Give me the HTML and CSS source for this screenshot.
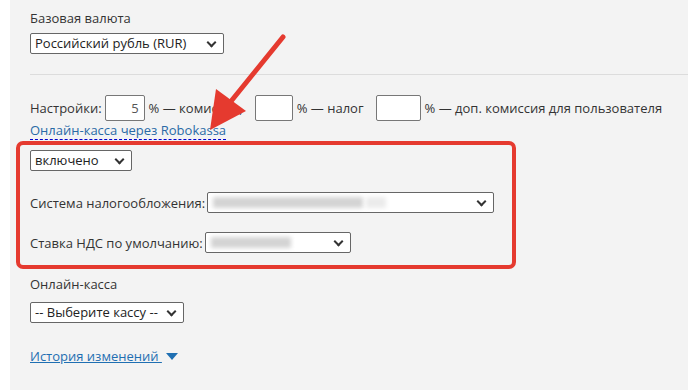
FILE: index.html
```html
<!doctype html>
<html>
<head>
    <meta charset="utf-8">
    <title>Настройки оплаты</title>
    <link rel="stylesheet" href="styles.css">
</head>
<body>
    <div class="page">
        <div class="field">
            <div class="label">Базовая валюта</div>
            <div class="sel sel-cur">Российский рубль (RUR)<span class="chev"></span></div>
        </div>
        <div class="line"></div>
        <div class="settings">
            <span>Настройки:</span>
            <span class="inp inp1">5</span>
            <span class="gap">% — комиссия,</span>
            <span class="inp inp2"></span>
            <span class="gap">% — налог</span>
            <span class="inp inp3"></span>
            <span>% — доп. комиссия для пользователя</span>
        </div>
        <a class="dash" href="#">Онлайн-касса через Robokassa</a>
        <div class="sel sel-on">включено<span class="chev"></span></div>
        <div class="row row-tax">
            <span>Система налогообложения:</span>
            <div class="sel sel-tax"><span class="blur b1"></span><span class="blur b1a"></span><span class="chev"></span></div>
        </div>
        <div class="row row-vat">
            <span>Ставка НДС по умолчанию:</span>
            <div class="sel sel-vat"><span class="blur b2"></span><span class="chev"></span></div>
        </div>
        <div class="label label-kassa">Онлайн-касса</div>
        <div class="sel sel-kassa">-- Выберите кассу --<span class="chev"></span></div>
        <div class="history">
            <a href="#">История изменений&nbsp;</a><span class="tri"></span>
        </div>

        <!-- пометка поверх скриншота -->
        <div class="mark"></div>
        <svg class="arrow" width="100" height="110" viewBox="0 0 100 110">
            <line x1="93" y1="10" x2="38" y2="78" stroke="#e53a2f" stroke-width="5" stroke-linecap="round"/>
            <polygon points="20,103 26,62 56,84" fill="#e53a2f"/>
        </svg>
    </div>
</body>
</html>
```

FILE: styles.css
```css
body {
    margin: 0;
    background: #fff;
    font-family: "Open Sans", "Liberation Sans", sans-serif;
    font-size: 13px;
    color: #333;
}
.page {
    position: relative;
    margin-left: 10px;
    height: 390px;
    background: #f3f3f3;
    padding: 9px 0 0 20px;
    box-sizing: border-box;
    overflow: hidden;
}
.label {
    line-height: 18px;
}
.sel {
    position: relative;
    box-sizing: border-box;
    height: 21px;
    line-height: 19px;
    border: 1px solid #666;
    border-radius: 2px;
    background: #fff;
    padding: 0 24px 0 4px;
    color: #222;
}
.chev {
    position: absolute;
    right: 8px;
    top: 5px;
    width: 5px;
    height: 5px;
    border-right: 2px solid #333;
    border-bottom: 2px solid #333;
    transform: rotate(45deg);
}
.sel-cur {
    width: 194px;
    margin-top: 6px;
}
.line {
    height: 1px;
    background: #dcdcdc;
    margin: 20px 0 0;
}
.settings {
    margin-top: 20px;
    height: 26px;
    display: flex;
    align-items: center;
}
.inp {
    box-sizing: border-box;
    width: 40px;
    height: 26px;
    line-height: 24px;
    border: 1px solid #777;
    border-radius: 2px;
    background: #fff;
    text-align: right;
    padding-right: 5px;
    margin: 0 4px 0 3px;
    color: #555;
}
.inp2 {
    width: 38px;
    margin-left: 0;
}
.inp3 {
    width: 45px;
    margin-left: 0;
}
.gap {
    margin-right: 12px;
}
.dash {
    display: inline-block;
    color: #2a6aa6;
    text-decoration: none;
    border-bottom: 1px dashed #0000cc;
    line-height: 17px;
    margin-top: 1px;
}
.sel-on {
    width: 102px;
    margin-top: 10px;
}
.row {
    display: flex;
    align-items: center;
    height: 21px;
}
.row-tax {
    margin-top: 21px;
}
.row-vat {
    margin-top: 19px;
}
.sel-tax {
    width: 287px;
    margin-left: 2px;
}
.sel-vat {
    width: 146px;
    margin-left: 2px;
}
.blur {
    position: absolute;
    top: 4px;
    left: 5px;
    height: 11px;
    background: #d4d4d4;
    filter: blur(2px);
}
.b1 {
    width: 150px;
}
.b1a {
    left: 158px;
    width: 20px;
    background: #ebebeb;
}
.b2 {
    width: 80px;
}
.label-kassa {
    margin-top: 22px;
}
.sel-kassa {
    width: 154px;
    margin-top: 9px;
}
.history {
    margin-top: 24px;
    display: flex;
    align-items: center;
}
.history a {
    color: #1f6fb2;
    text-decoration: underline;
}
.tri {
    width: 0;
    height: 0;
    border-left: 6px solid transparent;
    border-right: 6px solid transparent;
    border-top: 7px solid #1f6fb2;
    margin-left: 4px;
}
.mark {
    position: absolute;
    left: 6px;
    top: 141px;
    width: 500px;
    height: 128px;
    box-sizing: border-box;
    border: 4px solid #e53a2f;
    border-radius: 7px;
}
.arrow {
    position: absolute;
    left: 180px;
    top: 27px;
}
```
